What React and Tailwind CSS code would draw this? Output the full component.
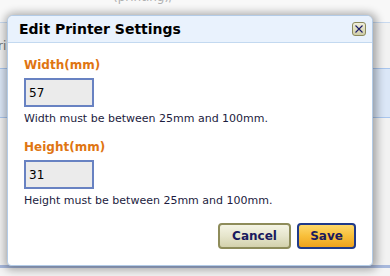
import React from "react";

const font = { fontFamily: '"DejaVu Sans", Verdana, sans-serif' };

function Field({ label, value, help }) {
  return (
    <div className="flex flex-col">
      <div className="text-[12px] font-bold leading-[15px] text-[#df7512]">{label}</div>
      <div className="mt-[5px] flex h-[29px] w-[70px] items-center border-2 border-[#6882c2] bg-[#ebebeb] pl-[3px] text-[12px] text-black">
        {value}
      </div>
      <div className="mt-[5px] text-[11px] leading-[14px] text-[#1c1c40]">{help}</div>
    </div>
  );
}

export default function App() {
  return (
    <div className="relative h-[276px] w-[390px] overflow-hidden bg-[#f2f2f2]" style={font}>
      {/* background page */}
      <div className="flex h-full flex-col">
        <div className="h-[22px] bg-[#f8f8f8] pl-[113px] text-[12px] leading-[12px] text-[#b0b0b0]">
          <div className="-mt-[9px]">(printing)/</div>
        </div>
        <div className="h-px bg-[#c9daf0]" />
        <div className="flex h-[45px] items-center text-[12px] text-[#777]">
          <span className="-ml-[9px]">Pri</span>
        </div>
        <div className="h-[50px] border-y border-[#a9c6ee] bg-[#dbe7f7]" />
        <div className="h-[147px]" />
        <div className="h-[3px] bg-[#a7b8dc]" />
        <div className="flex-1 bg-[#f4f4f4]" />
      </div>

      {/* dialog */}
      <div className="absolute left-[7px] top-[15px] flex h-[251px] w-[366px] flex-col overflow-hidden rounded-t-[6px] rounded-b-[4px] border border-[#b3cbe6] bg-white shadow-[1px_1px_9px_3px_rgba(0,0,0,0.32)]">
        <div className="flex h-[27px] items-center justify-between border-b border-[#c3d9f0] bg-[#e9f2fd] pl-[11px] pr-[6px]">
          <div className="text-[14px] font-bold text-black">Edit Printer Settings</div>
          <button className="flex h-[14px] w-[14px] items-center justify-center rounded-[3px] border border-[#8c8a5c] bg-gradient-to-b from-[#f1f0dc] to-[#cfcda8]">
            <svg width="8" height="8" viewBox="0 0 8 8">
              <path d="M0.5 0.5 L7.5 7.5 M7.5 0.5 L0.5 7.5" stroke="#1c1c6a" strokeWidth="1.1" />
            </svg>
          </button>
        </div>
        <div className="flex flex-1 flex-col pl-[16px] pt-[15px]">
          <Field label="Width(mm)" value="57" help="Width must be between 25mm and 100mm." />
          <div className="mt-[14px]">
            <Field label="Height(mm)" value="31" help="Height must be between 25mm and 100mm." />
          </div>
          <div className="mt-[15px] flex justify-end gap-[6px] pr-[16px]">
            <button className="flex h-[26px] w-[73px] items-center justify-center rounded-[4px] border-2 border-[#8e8c5a] bg-gradient-to-b from-[#f4f4e4] via-[#e6e5cc] to-[#d3d1ac] text-[12px] font-bold text-[#1a1a5e]">
              Cancel
            </button>
            <button className="flex h-[26px] w-[59px] items-center justify-center rounded-[4px] border-2 border-[#1f3a8a] bg-gradient-to-b from-[#fdd868] via-[#f8bf3a] to-[#eea21c] text-[12px] font-bold text-[#1a1a5e]">
              Save
            </button>
          </div>
        </div>
      </div>
    </div>
  );
}
